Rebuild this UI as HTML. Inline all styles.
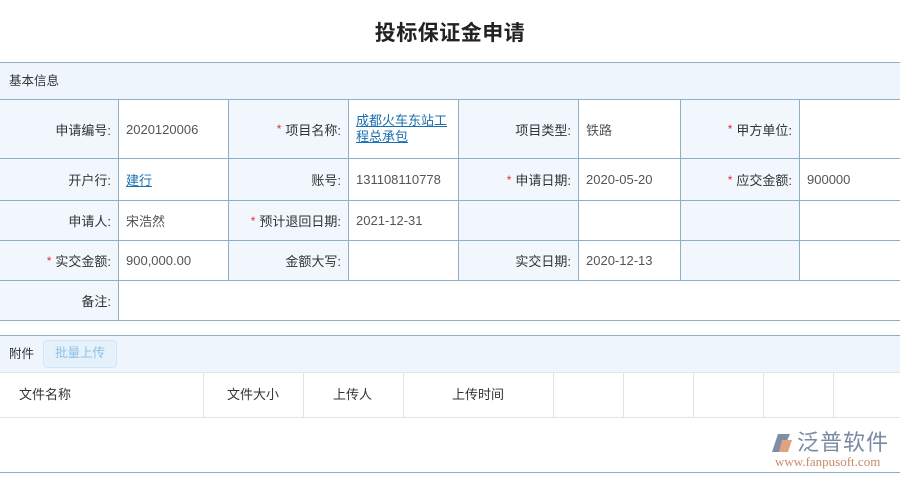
<!DOCTYPE html>
<html><head><meta charset="utf-8"><style>
*{margin:0;padding:0;box-sizing:border-box}
body{width:900px;height:477px;background:#fff;position:relative;overflow:hidden;font-family:"Liberation Sans","Noto Sans CJK SC",sans-serif;font-size:13px;color:#333}
.a{position:absolute}
.title{left:0;width:900px;top:17px;text-align:center;font-size:21px;font-weight:bold;color:#222;letter-spacing:0.5px}
.c{position:absolute;border-right:1px solid #8fb0c4;border-bottom:1px solid #8fb0c4;display:flex;align-items:center;padding:0 7px}
.l{background:#f1f7fd;justify-content:flex-end;color:#333}
.v{background:#fff;color:#555}
.r{color:#d33;margin-right:4px;font-size:12px}
a{color:#1a6fb0;text-decoration:underline}
.hl{border-left:1px solid #e3e3e3;position:absolute;top:373px;height:44px}
</style></head><body>
<div class="a title">投标保证金申请</div>
<div class="a" style="left:0;top:62px;width:900px;height:1px;background:#8fb0c4"></div>
<div class="a" style="left:0;top:63px;width:900px;height:37px;background:#eff5fc;border-bottom:1px solid #8fb0c4;padding:7px 0 0 9px;font-size:12.5px;color:#333">基本信息</div>

<div class="c l" style="left:0;top:100px;width:119px;height:59px">申请编号:</div>
<div class="c v" style="left:119px;top:100px;width:110px;height:59px">2020120006</div>
<div class="c l" style="left:229px;top:100px;width:120px;height:59px"><span class="r">*</span>项目名称:</div>
<div class="c v" style="left:349px;top:100px;width:110px;height:59px;line-height:16px"><a>成都火车东站工程总承包</a></div>
<div class="c l" style="left:459px;top:100px;width:120px;height:59px">项目类型:</div>
<div class="c v" style="left:579px;top:100px;width:102px;height:59px">铁路</div>
<div class="c l" style="left:681px;top:100px;width:119px;height:59px"><span class="r">*</span>甲方单位:</div>
<div class="c v" style="left:800px;top:100px;width:100px;height:59px;border-right:none"></div>

<div class="c l" style="left:0;top:159px;width:119px;height:42px">开户行:</div>
<div class="c v" style="left:119px;top:159px;width:110px;height:42px"><a>建行</a></div>
<div class="c l" style="left:229px;top:159px;width:120px;height:42px">账号:</div>
<div class="c v" style="left:349px;top:159px;width:110px;height:42px">131108110778</div>
<div class="c l" style="left:459px;top:159px;width:120px;height:42px"><span class="r">*</span>申请日期:</div>
<div class="c v" style="left:579px;top:159px;width:102px;height:42px">2020-05-20</div>
<div class="c l" style="left:681px;top:159px;width:119px;height:42px"><span class="r">*</span>应交金额:</div>
<div class="c v" style="left:800px;top:159px;width:100px;height:42px;border-right:none">900000</div>

<div class="c l" style="left:0;top:201px;width:119px;height:40px">申请人:</div>
<div class="c v" style="left:119px;top:201px;width:110px;height:40px">宋浩然</div>
<div class="c l" style="left:229px;top:201px;width:120px;height:40px"><span class="r">*</span>预计退回日期:</div>
<div class="c v" style="left:349px;top:201px;width:110px;height:40px">2021-12-31</div>
<div class="c l" style="left:459px;top:201px;width:120px;height:40px"></div>
<div class="c v" style="left:579px;top:201px;width:102px;height:40px"></div>
<div class="c l" style="left:681px;top:201px;width:119px;height:40px"></div>
<div class="c v" style="left:800px;top:201px;width:100px;height:40px;border-right:none"></div>

<div class="c l" style="left:0;top:241px;width:119px;height:40px"><span class="r">*</span>实交金额:</div>
<div class="c v" style="left:119px;top:241px;width:110px;height:40px">900,000.00</div>
<div class="c l" style="left:229px;top:241px;width:120px;height:40px">金额大写:</div>
<div class="c v" style="left:349px;top:241px;width:110px;height:40px"></div>
<div class="c l" style="left:459px;top:241px;width:120px;height:40px">实交日期:</div>
<div class="c v" style="left:579px;top:241px;width:102px;height:40px">2020-12-13</div>
<div class="c l" style="left:681px;top:241px;width:119px;height:40px"></div>
<div class="c v" style="left:800px;top:241px;width:100px;height:40px;border-right:none"></div>

<div class="c l" style="left:0;top:281px;width:119px;height:40px">备注:</div>
<div class="c v" style="left:119px;top:281px;width:781px;height:40px;border-right:none"></div>

<div class="a" style="left:0;top:335px;width:900px;height:1px;background:#8fb0c4"></div>
<div class="a" style="left:0;top:336px;width:900px;height:37px;background:#eff5fc;border-bottom:1px solid #e3e3e3"></div>
<div class="a" style="left:9px;top:343px;font-size:12.5px">附件</div>
<div class="a" style="left:43px;top:340px;width:74px;height:28px;border:1px solid #d3e6f5;border-radius:4px;background:#e5f1fb;color:#8ec0e4;text-align:center;line-height:24px;font-size:12.5px">批量上传</div>
<div class="a" style="left:19px;top:384px">文件名称</div>
<div class="a" style="left:227px;top:384px">文件大小</div>
<div class="a" style="left:333px;top:384px">上传人</div>
<div class="a" style="left:452px;top:384px">上传时间</div>
<div class="hl" style="left:203px"></div><div class="hl" style="left:303px"></div><div class="hl" style="left:403px"></div><div class="hl" style="left:553px"></div><div class="hl" style="left:623px"></div><div class="hl" style="left:693px"></div><div class="hl" style="left:763px"></div><div class="hl" style="left:833px"></div>
<div class="a" style="left:0;top:417px;width:900px;height:1px;background:#e3e3e3"></div>

<svg class="a" style="left:770px;top:432px" width="26" height="22" viewBox="0 0 26 22"><path d="M8 2 L20 2 L12 20 L2 20 Z" fill="#7f8ea6"/><path d="M12 8 L22 8 L18 20 L9 20 Z" fill="#e0a27f"/></svg>
<div class="a" style="left:797px;top:428px;font-size:22px;color:#7b8aa2;letter-spacing:1px;font-family:'Noto Sans CJK SC',sans-serif;line-height:26px">泛普软件</div>
<div class="a" style="left:775px;top:454px;font-size:13px;color:#c98a6a;font-family:'Liberation Serif',serif">www.fanpusoft.com</div>
<div class="a" style="left:0;top:472px;width:900px;height:1px;background:#8fb0c4"></div>
</body></html>
